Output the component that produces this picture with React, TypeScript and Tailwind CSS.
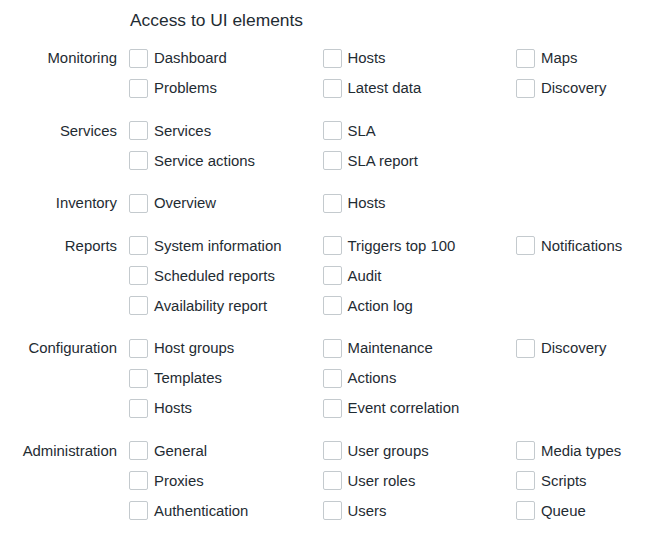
const sections: { label: string; rows: (string | null)[][] }[] = [
  {
    label: "Monitoring",
    rows: [
      ["Dashboard", "Hosts", "Maps"],
      ["Problems", "Latest data", "Discovery"],
    ],
  },
  {
    label: "Services",
    rows: [
      ["Services", "SLA", null],
      ["Service actions", "SLA report", null],
    ],
  },
  {
    label: "Inventory",
    rows: [["Overview", "Hosts", null]],
  },
  {
    label: "Reports",
    rows: [
      ["System information", "Triggers top 100", "Notifications"],
      ["Scheduled reports", "Audit", null],
      ["Availability report", "Action log", null],
    ],
  },
  {
    label: "Configuration",
    rows: [
      ["Host groups", "Maintenance", "Discovery"],
      ["Templates", "Actions", null],
      ["Hosts", "Event correlation", null],
    ],
  },
  {
    label: "Administration",
    rows: [
      ["General", "User groups", "Media types"],
      ["Proxies", "User roles", "Scripts"],
      ["Authentication", "Users", "Queue"],
    ],
  },
];

function CheckItem({ label }: { label: string }) {
  return (
    <label className="flex items-center gap-[6px] h-[30px]">
      <span className="w-[19px] h-[19px] shrink-0 rounded-[2px] border border-[#c4cace] bg-white" />
      <span>{label}</span>
    </label>
  );
}

export default function App() {
  return (
    <div
      className="w-[647px] h-[533px] overflow-hidden bg-white text-[#1f2c33] text-[14.9px] leading-[18px]"
      style={{ fontFamily: '"Liberation Sans", Arial, sans-serif' }}
    >
      <div className="h-[43px] pl-[130px] pt-[10px] text-[17.4px] leading-[20px]">
        Access to UI elements
      </div>
      <div className="flex flex-col gap-[12.6px]">
        {sections.map((s) => (
          <div key={s.label} className="flex">
            <div className="w-[117px] h-[30px] flex items-center justify-end shrink-0">
              {s.label}
            </div>
            <div className="pl-[12px] flex flex-col">
              {s.rows.map((row, i) => (
                <div key={i} className="grid grid-cols-[193.5px_193.5px_120px]">
                  {row.map((item, j) =>
                    item ? <CheckItem key={j} label={item} /> : <div key={j} className="h-[30px]" />
                  )}
                </div>
              ))}
            </div>
          </div>
        ))}
      </div>
    </div>
  );
}
